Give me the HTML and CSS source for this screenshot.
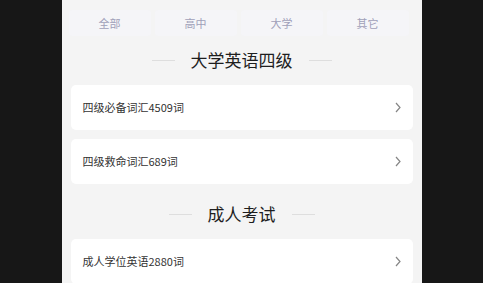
FILE: index.html
```html
<!DOCTYPE html>
<html lang="zh-Hans">
<head>
    <meta charset="UTF-8">
    <meta name="viewport" content="width=device-width, initial-scale=1.0">
    <title>词汇书</title>
    <link rel="stylesheet" href="styles.css">
</head>
<body>
    <div class="page">
        <div class="tabs">
            <div class="tab">全部</div>
            <div class="tab">高中</div>
            <div class="tab">大学</div>
            <div class="tab">其它</div>
        </div>

        <section class="section">
            <div class="section-title">
                <span class="line"></span>
                <h2>大学英语四级</h2>
                <span class="line"></span>
            </div>
            <div class="card-list">
                <div class="card">
                    <span>四级必备词汇4509词</span>
                    <svg class="arrow" width="6" height="11" viewBox="0 0 6 11"><polyline points="1,1 5,5.5 1,10" /></svg>
                </div>
                <div class="card">
                    <span>四级救命词汇689词</span>
                    <svg class="arrow" width="6" height="11" viewBox="0 0 6 11"><polyline points="1,1 5,5.5 1,10" /></svg>
                </div>
            </div>
        </section>

        <section class="section">
            <div class="section-title">
                <span class="line"></span>
                <h2>成人考试</h2>
                <span class="line"></span>
            </div>
            <div class="card-list">
                <div class="card">
                    <span>成人学位英语2880词</span>
                    <svg class="arrow" width="6" height="11" viewBox="0 0 6 11"><polyline points="1,1 5,5.5 1,10" /></svg>
                </div>
            </div>
        </section>
    </div>
</body>
</html>
```

FILE: styles.css
```css
body {
    margin: 0;
    padding: 0;
    background-color: #171717;
    font-family: "Noto Sans CJK SC", "Noto Sans", sans-serif;
    overflow: hidden;
}

.page {
    width: 360px;
    min-height: 283px;
    margin: 0 auto;
    padding: 10px 9px 0;
    box-sizing: border-box;
    background-color: #f4f4f4;
}

.tabs {
    display: flex;
    gap: 4px;
    margin-left: -2px;
}

.tab {
    width: 82px;
    height: 26px;
    line-height: 26px;
    text-align: center;
    font-size: 11px;
    color: #a0a0b9;
    background-color: #f5f5f8;
    border-radius: 3px;
}

.section-title {
    display: flex;
    align-items: center;
    justify-content: center;
    gap: 16px;
    padding: 12px 0 13px;
}

.section + .section .section-title {
    padding-top: 18px;
    padding-bottom: 13px;
}

.section-title h2 {
    margin: 0;
    font-size: 17px;
    font-weight: normal;
    line-height: 24px;
    color: #1e1e1e;
}

.line {
    width: 23px;
    height: 1px;
    background-color: #dedede;
}

.card-list {
    display: flex;
    flex-direction: column;
    gap: 9px;
}

.card {
    height: 45px;
    display: flex;
    align-items: center;
    justify-content: space-between;
    padding: 0 12px;
    background-color: #fff;
    border-radius: 5px;
    font-size: 11px;
    color: #333;
}

.card span {
    margin-top: -1px;
}

.arrow polyline {
    fill: none;
    stroke: #858585;
    stroke-width: 1.2;
}
```
